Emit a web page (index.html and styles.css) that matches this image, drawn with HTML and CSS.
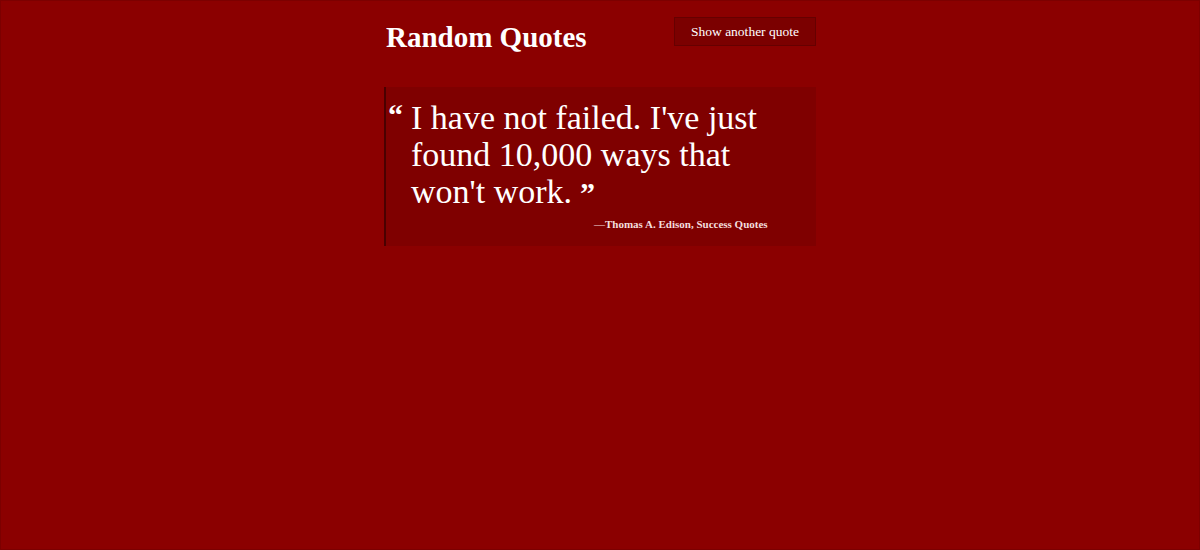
FILE: index.html
```html
<!DOCTYPE html>
<html lang="en">
<head>
<meta charset="utf-8">
<title>Random Quotes</title>
<link rel="stylesheet" href="styles.css">
</head>
<body>
<div class="frame">
  <div class="page">
    <header class="top">
      <h1 class="title">Random Quotes</h1>
      <button class="next-btn" type="button">Show another quote</button>
    </header>
    <blockquote class="quote">
      <p class="quote-text">I have not failed. I've just found 10,000 ways that won't work.</p>
      <footer class="attribution">&mdash;Thomas A. Edison, Success Quotes</footer>
    </blockquote>
  </div>
</div>
</body>
</html>
```

FILE: styles.css
```css
* { box-sizing: border-box; }

html, body {
  margin: 0;
  padding: 0;
  height: 100%;
}

body {
  background: #8b0000;
  color: #fff;
  font-family: "Liberation Serif", "DejaVu Serif", serif;
}

.frame {
  min-height: 100%;
  border: 1px solid #7c0000;
}

.page {
  width: 432px;
  margin: 0 auto;
}

.top {
  display: flex;
  justify-content: space-between;
  align-items: flex-start;
  padding-top: 16px;
}

.title {
  margin: 0;
  padding-left: 2px;
  font-size: 29px;
  line-height: 40px;
  font-weight: bold;
  color: #fff;
}

.next-btn {
  font-family: inherit;
  font-size: 13.5px;
  white-space: nowrap;
  color: #fff;
  background: #7b0000;
  border: 1px solid #660000;
  height: 29px;
  padding: 0;
  width: 142px;
  cursor: pointer;
}

.quote {
  margin: 30px 0 0;
  background: #7f0000;
  border-left: 2px solid #4a0000;
  padding: 12px 40px 14px 25px;
}

.quote-text {
  margin: 0;
  font-size: 34px;
  line-height: 37px;
  color: #fff;
  position: relative;
}

.quote-text::before,
.quote-text::after {
  font-weight: bold;
  font-size: 30px;
  line-height: 20px;
}

.quote-text::before {
  content: "\201C";
  position: absolute;
  left: -23px;
  top: 6px;
}

.quote-text::after {
  content: "\201D";
  margin-left: 8px;
}

.attribution {
  margin-top: 6px;
  padding-left: 183px;
  white-space: nowrap;
  font-size: 11px;
  line-height: 16px;
  font-weight: bold;
  color: #f3dede;
}
```
